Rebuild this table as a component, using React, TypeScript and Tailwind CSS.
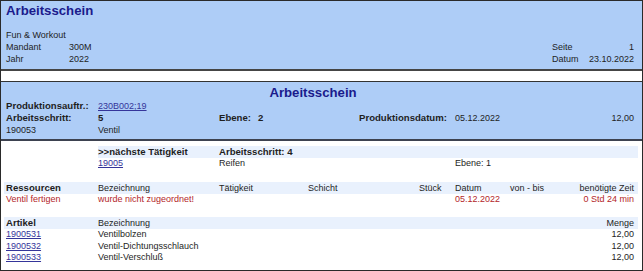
import React from "react";

const band = "bg-[#e9f1fd]";
const link = "text-[#35359a] underline";
const red = "text-[#b3262a]";
const bold = "font-bold text-[9.6px]";

// Column grid shared by the lower table rows
const tableCols = "grid grid-cols-[92px_121px_89px_111px_36px_55px_1fr]";

const Header = () => (
  <div className="bg-[#aecdf7] pl-[5px] pr-[8px] pt-[2px] pb-[4px] border-b-2 border-[#454545]">
    <h1 className="text-[13.2px] leading-[16px] font-bold text-[#1b1b8c]">Arbeitsschein</h1>
    <div className="mt-[10px] flex items-end justify-between">
      <div className="leading-[12px]">
        <div>Fun &amp; Workout</div>
        <div className="flex">
          <span className="w-[63px]">Mandant</span>
          <span>300M</span>
        </div>
        <div className="flex">
          <span className="w-[63px]">Jahr</span>
          <span>2022</span>
        </div>
      </div>
      <div className="w-[82px] leading-[12px]">
        <div className="flex justify-between">
          <span>Seite</span>
          <span>1</span>
        </div>
        <div className="flex justify-between">
          <span>Datum</span>
          <span>23.10.2022</span>
        </div>
      </div>
    </div>
  </div>
);

const OrderBlock = () => (
  <div className="bg-[#aecdf7] border-t border-[#333] border-b-2 border-b-[#3d4250] pl-[5px] pr-[8px] pt-[4px] pb-[3px]">
    <h2 className="text-center pr-[14px] text-[13.2px] leading-[14px] font-bold text-[#1b1b8c]">Arbeitsschein</h2>
    <div className="grid grid-cols-[92px_121px_140px_96px_1fr] leading-[12px]">
      <span className={bold}>Produktionsauftr.:</span>
      <span className={link}>230B002;19</span>
      <span className="col-span-3" />

      <span className={bold}>Arbeitsschritt:</span>
      <span className={bold}>5</span>
      <span className={`${bold} flex gap-[7px]`}>
        <span>Ebene:</span>
        <span>2</span>
      </span>
      <span className={bold}>Produktionsdatum:</span>
      <span className="flex justify-between">
        <span>05.12.2022</span>
        <span>12,00</span>
      </span>

      <span>190053</span>
      <span>Ventil</span>
      <span className="col-span-3" />
    </div>
  </div>
);

const Details = () => (
  <div className="ml-[3px] mr-[4px]">
    {/* next step */}
    <div className={`mt-[5px] ml-[94px] ${band} grid grid-cols-[121px_1fr] h-[12px] leading-[12px] pr-[4px]`}>
      <span className={bold}>&gt;&gt;nächste Tätigkeit</span>
      <span className={bold}>Arbeitsschritt: 4</span>
    </div>
    <div className="ml-[94px] grid grid-cols-[121px_236px_1fr] leading-[11px] pr-[4px]">
      <span className={link}>19005</span>
      <span>Reifen</span>
      <span>Ebene: 1</span>
    </div>

    {/* resources */}
    <div className={`mt-[13px] ${band} ${tableCols} h-[12px] leading-[12px] pl-[2px] pr-[4px]`}>
      <span className={bold}>Ressourcen</span>
      <span>Bezeichnung</span>
      <span>Tätigkeit</span>
      <span>Schicht</span>
      <span>Stück</span>
      <span>Datum</span>
      <span className="flex justify-between">
        <span>von - bis</span>
        <span>benötigte Zeit</span>
      </span>
    </div>
    <div className={`${tableCols} leading-[11px] pl-[2px] pr-[4px] ${red}`}>
      <span>Ventil fertigen</span>
      <span className="col-span-4">wurde nicht zugeordnet!</span>
      <span>05.12.2022</span>
      <span className="text-right">0 Std 24 min</span>
    </div>

    {/* articles */}
    <div className={`mt-[12px] ${band} ${tableCols} h-[12px] leading-[12px] pl-[2px] pr-[4px]`}>
      <span className={bold}>Artikel</span>
      <span className="col-span-5">Bezeichnung</span>
      <span className="text-right">Menge</span>
    </div>
    {[
      ["1900531", "Ventilbolzen"],
      ["1900532", "Ventil-Dichtungsschlauch"],
      ["1900533", "Ventil-Verschluß"],
    ].map(([nr, name]) => (
      <div key={nr} className={`${tableCols} leading-[11.5px] pl-[2px] pr-[4px]`}>
        <span className={link}>{nr}</span>
        <span className="col-span-5">{name}</span>
        <span className="text-right">12,00</span>
      </div>
    ))}
  </div>
);

export default function App() {
  return (
    <div
      className="w-[643px] h-[271px] overflow-hidden bg-white border border-[#2a2a2a] text-[9px] text-[#1e1e1e]"
      style={{ fontFamily: '"Liberation Sans", Arial, sans-serif' }}
    >
      <Header />
      <div className="h-[10px]" />
      <OrderBlock />
      <Details />
    </div>
  );
}
